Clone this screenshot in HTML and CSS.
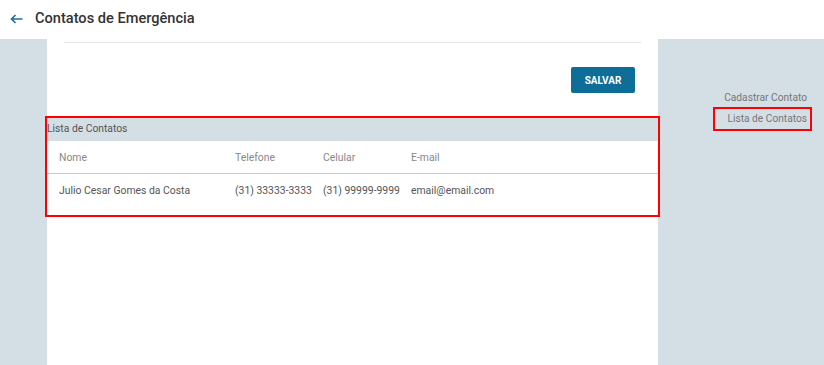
FILE: index.html
```html
<!DOCTYPE html>
<html lang="pt-BR">
<head>
<meta charset="utf-8">
<title>Contatos de Emergência</title>
<link rel="stylesheet" href="styles.css">
</head>
<body>
<header class="topbar">
  <svg class="back" width="13" height="10" viewBox="0 0 13 10" aria-hidden="true">
    <path d="M12.5 5H1.5M5.5 1L1.5 5L5.5 9" fill="none" stroke="#1b6f98" stroke-width="1.6"/>
  </svg>
  <h1 class="title">Contatos de Emergência</h1>
</header>
<main class="layout">
  <div class="gutter"></div>
  <section class="panel">
    <div class="divider"></div>
    <div class="actions"><button class="btn">SALVAR</button></div>
    <div class="list">
      <div class="list-head">Lista de Contatos</div>
      <div class="table">
        <div class="row head">
          <span class="c-nome">Nome</span>
          <span class="c-tel">Telefone</span>
          <span class="c-cel">Celular</span>
          <span class="c-mail">E-mail</span>
        </div>
        <div class="row body">
          <span class="c-nome">Julio Cesar Gomes da Costa</span>
          <span class="c-tel">(31) 33333-3333</span>
          <span class="c-cel">(31) 99999-9999</span>
          <span class="c-mail">email@email.com</span>
        </div>
      </div>
    </div>
  </section>
  <nav class="side">
    <a class="side-link">Cadastrar Contato</a>
    <a class="side-link active">Lista de Contatos</a>
  </nav>
</main>
</body>
</html>
```

FILE: styles.css
```css
html, body { margin: 0; padding: 0; }
body {
  font-family: Roboto, "Liberation Sans", Arial, sans-serif;
  background: #d3dee5;
  color: #555;
  width: 824px;
  height: 365px;
  overflow: hidden;
}
.topbar {
  height: 39px;
  background: #fff;
  display: flex;
  align-items: center;
  padding-left: 10px;
  box-sizing: border-box;
}
.back { display: block; margin-right: 12px; margin-top: -2px; }
.title {
  margin: 0;
  font-size: 14.6px;
  font-weight: 500;
  color: #333;
  margin-top: -3px;
}
.layout {
  display: flex;
  height: 326px;
}
.gutter { width: 47px; flex: none; }
.panel {
  width: 611px;
  flex: none;
  background: #fff;
  display: flex;
  flex-direction: column;
}
.divider {
  height: 1px;
  background: #e3e6e8;
  margin: 3px 17px 0 17px;
}
.actions {
  display: flex;
  justify-content: flex-end;
  padding: 24px 23px 0 0;
}
.btn {
  width: 64px;
  height: 26px;
  border: 0;
  border-radius: 2px;
  background: #0f6e97;
  color: #fff;
  font-family: inherit;
  font-size: 10px;
  font-weight: 700;
  padding: 0;
}
.list {
  margin-top: 25px;
  outline: 2px solid #ff0000;
  padding-bottom: 8px;
}
.list-head {
  background: #d3dee5;
  height: 23px;
  line-height: 21px;
  font-size: 10.3px;
  color: #555;
}
.row {
  display: flex;
  align-items: center;
  font-size: 10.4px;
  padding-left: 12px;
}
.row.head { height: 33px; color: #888; border-bottom: 1px solid #b3d0e2; box-sizing: border-box; }
.row.body { height: 33px; color: #555; }
.c-nome { width: 176px; }
.c-tel { width: 88px; }
.c-cel { width: 88px; }
.c-mail { flex: 1; }
.side {
  flex: 1;
  display: flex;
  flex-direction: column;
  align-items: flex-end;
  padding: 49px 17px 0 0;
  gap: 1px;
}
.side-link {
  font-size: 10.2px;
  color: #777;
  line-height: 20px;
  cursor: pointer;
}
.side-link.active {
  outline: 2px solid #ff0000;
  padding: 0 3px 0 12px;
  margin-right: -3px;
}
```
